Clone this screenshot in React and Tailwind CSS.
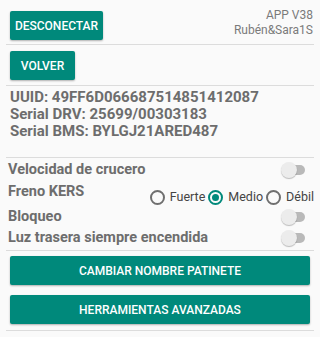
const TEAL = "bg-[#00897b]";

function Divider() {
  return <div className="h-px bg-[#dcdcdc] mx-[6px]" />;
}

function Switch() {
  return (
    <div className="relative w-[24px] h-[14px] mr-[1px]">
      <div className="absolute left-[4px] right-0 top-[2px] h-[10px] rounded-full bg-[#b9b9b9]" />
      <div className="absolute left-0 top-[-1px] w-[16px] h-[16px] rounded-full bg-[#ececec] shadow-[0_1px_1px_rgba(0,0,0,0.25)]" />
    </div>
  );
}

function Radio({ label, checked }) {
  return (
    <div className="flex items-center gap-[5px]">
      <div
        className={`w-[15px] h-[15px] rounded-full border-2 flex items-center justify-center ${
          checked ? "border-[#00897b]" : "border-[#6f6f6f]"
        }`}
      >
        {checked && <div className="w-[7px] h-[7px] rounded-full bg-[#00897b]" />}
      </div>
      <span className="text-[12.5px] text-[#444]">{label}</span>
    </div>
  );
}

function Button({ children, className = "" }) {
  return (
    <div
      className={`${TEAL} h-[29px] rounded-[2px] text-white text-[12px] font-medium flex items-center justify-center shadow-[0_1px_2px_rgba(0,0,0,0.3)] ${className}`}
    >
      {children}
    </div>
  );
}

export default function App() {
  return (
    <div
      className="w-[320px] h-[337px] bg-[#fafafa] overflow-hidden text-[#6d6d6d]"
      style={{ fontFamily: "Roboto, 'Liberation Sans', sans-serif" }}
    >
      <div className="flex justify-between items-start pt-[11px] pl-[10px] pr-[7px] h-[44px]">
        <Button className="w-[93px]">DESCONECTAR</Button>
        <div className="text-right text-[12px] leading-[15px] text-[#7a7a7a] mt-[-3px]">
          <div>APP V38</div>
          <div>Rubén&amp;Sara1S</div>
        </div>
      </div>
      <Divider />
      <div className="pt-[6px] pl-[10px] h-[40px]">
        <Button className="w-[65px]">VOLVER</Button>
      </div>
      <Divider />
      <div className="pl-[10px] pt-[3px] h-[71px] text-[15px] leading-[17px] font-bold">
        <div>UUID: 49FF6D066687514851412087</div>
        <div>Serial DRV: 25699/00303183</div>
        <div>Serial BMS: BYLGJ21ARED487</div>
      </div>
      <Divider />
      <div className="pl-[8px] pr-[14px] pt-[1px] h-[92px] text-[14.5px] font-bold">
        <div className="flex items-center justify-between h-[22px]">
          <span>Velocidad de crucero</span>
          <Switch />
        </div>
        <div className="flex items-start justify-between h-[25px] mr-[-8px]">
          <span className="leading-[22px]">Freno KERS</span>
          <div className="flex items-center gap-[3px] pt-[7px] font-normal">
            <Radio label="Fuerte" />
            <Radio label="Medio" checked />
            <Radio label="Débil" />
          </div>
        </div>
        <div className="flex items-center justify-between h-[22px]">
          <span>Bloqueo</span>
          <Switch />
        </div>
        <div className="flex items-center justify-between h-[20px]">
          <span>Luz trasera siempre encendida</span>
          <Switch />
        </div>
      </div>
      <Divider />
      <div className="px-[10px] pt-[5px] h-[79px] flex flex-col gap-[10px]">
        <Button>CAMBIAR NOMBRE PATINETE</Button>
        <Button>HERRAMIENTAS AVANZADAS</Button>
      </div>
      <Divider />
    </div>
  );
}
